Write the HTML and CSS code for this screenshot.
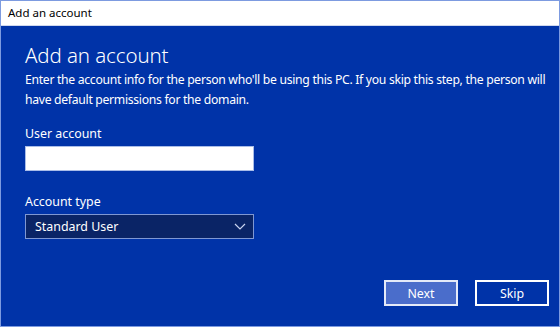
FILE: index.html
```html
<!DOCTYPE html>
<html lang="en">
<head>
  <meta charset="UTF-8" />
  <title>Add an account</title>
  <link rel="stylesheet" href="styles.css">
</head>
<body>
  <div class="window">
    <div class="titlebar">Add an account</div>

    <div class="content">
      <h1>Add an account</h1>
      <p class="intro">Enter the account info for the person who'll be using this PC. If you skip this step, the person will<br>have default permissions for the domain.</p>

      <div class="field">
        <label for="userAccount">User account</label>
        <input type="text" id="userAccount" class="text-input" />
      </div>

      <div class="field">
        <label>Account type</label>
        <div class="select">
          <span>Standard User</span>
          <svg class="chevron" width="12" height="7" viewBox="0 0 12 7">
            <path d="M1 1 L6 6 L11 1" fill="none" stroke="#c9d4f0" stroke-width="1.2" />
          </svg>
        </div>
      </div>

      <div class="actions">
        <button class="next">Next</button>
        <button class="skip">Skip</button>
      </div>
    </div>
  </div>
</body>
</html>
```

FILE: styles.css
```css
html, body {
  margin: 0;
  padding: 0;
}

body {
  font-family: 'Noto Sans', 'Open Sans', sans-serif;
  width: 560px;
  height: 327px;
  overflow: hidden;
}

.window {
  box-sizing: border-box;
  width: 560px;
  height: 327px;
  border: 1px solid #7d9be0;
  background: #0033a8;
  display: flex;
  flex-direction: column;
}

.titlebar {
  background: #fff;
  height: 24px;
  line-height: 24px;
  padding-left: 7px;
  font-size: 11.5px;
  color: #000;
  border-bottom: 1px solid #cfd8ee;
}

.content {
  flex: 1;
  padding: 14px 6px 0 24px;
  color: #fff;
  display: flex;
  flex-direction: column;
}

h1 {
  margin: 0;
  font-size: 20.5px;
  font-weight: 300;
  line-height: 30px;
  letter-spacing: -0.1px;
}

.intro {
  margin: 0;
  font-size: 12.2px;
  line-height: 20px;
  letter-spacing: -0.3px;
  white-space: nowrap;
}

.field {
  margin-top: 15px;
  display: flex;
  flex-direction: column;
}

.field + .field {
  margin-top: 22px;
}

label {
  font-size: 12.4px;
  line-height: 18px;
  margin-bottom: 3px;
}

.text-input {
  box-sizing: border-box;
  width: 229px;
  height: 25px;
  margin: 0;
  border: 1px solid #a9bde8;
  background: #fff;
  outline: none;
}

.select {
  box-sizing: border-box;
  width: 229px;
  height: 25px;
  border: 1px solid #7f97d2;
  background: #0a2466;
  display: flex;
  align-items: center;
  justify-content: space-between;
  padding: 0 7px 0 9px;
  font-size: 12.4px;
}

.actions {
  margin-top: auto;
  margin-right: 4px;
  margin-bottom: 20px;
  display: flex;
  justify-content: flex-end;
  gap: 17px;
}

button {
  box-sizing: border-box;
  width: 74px;
  height: 26px;
  border: 2px solid #fff;
  color: #fff;
  font-family: inherit;
  font-size: 12.4px;
  padding: 0;
  cursor: pointer;
}

.next {
  background: #4a6dcb;
  border-color: #e4eaf8;
}

.skip {
  background: #0033a8;
}
```
